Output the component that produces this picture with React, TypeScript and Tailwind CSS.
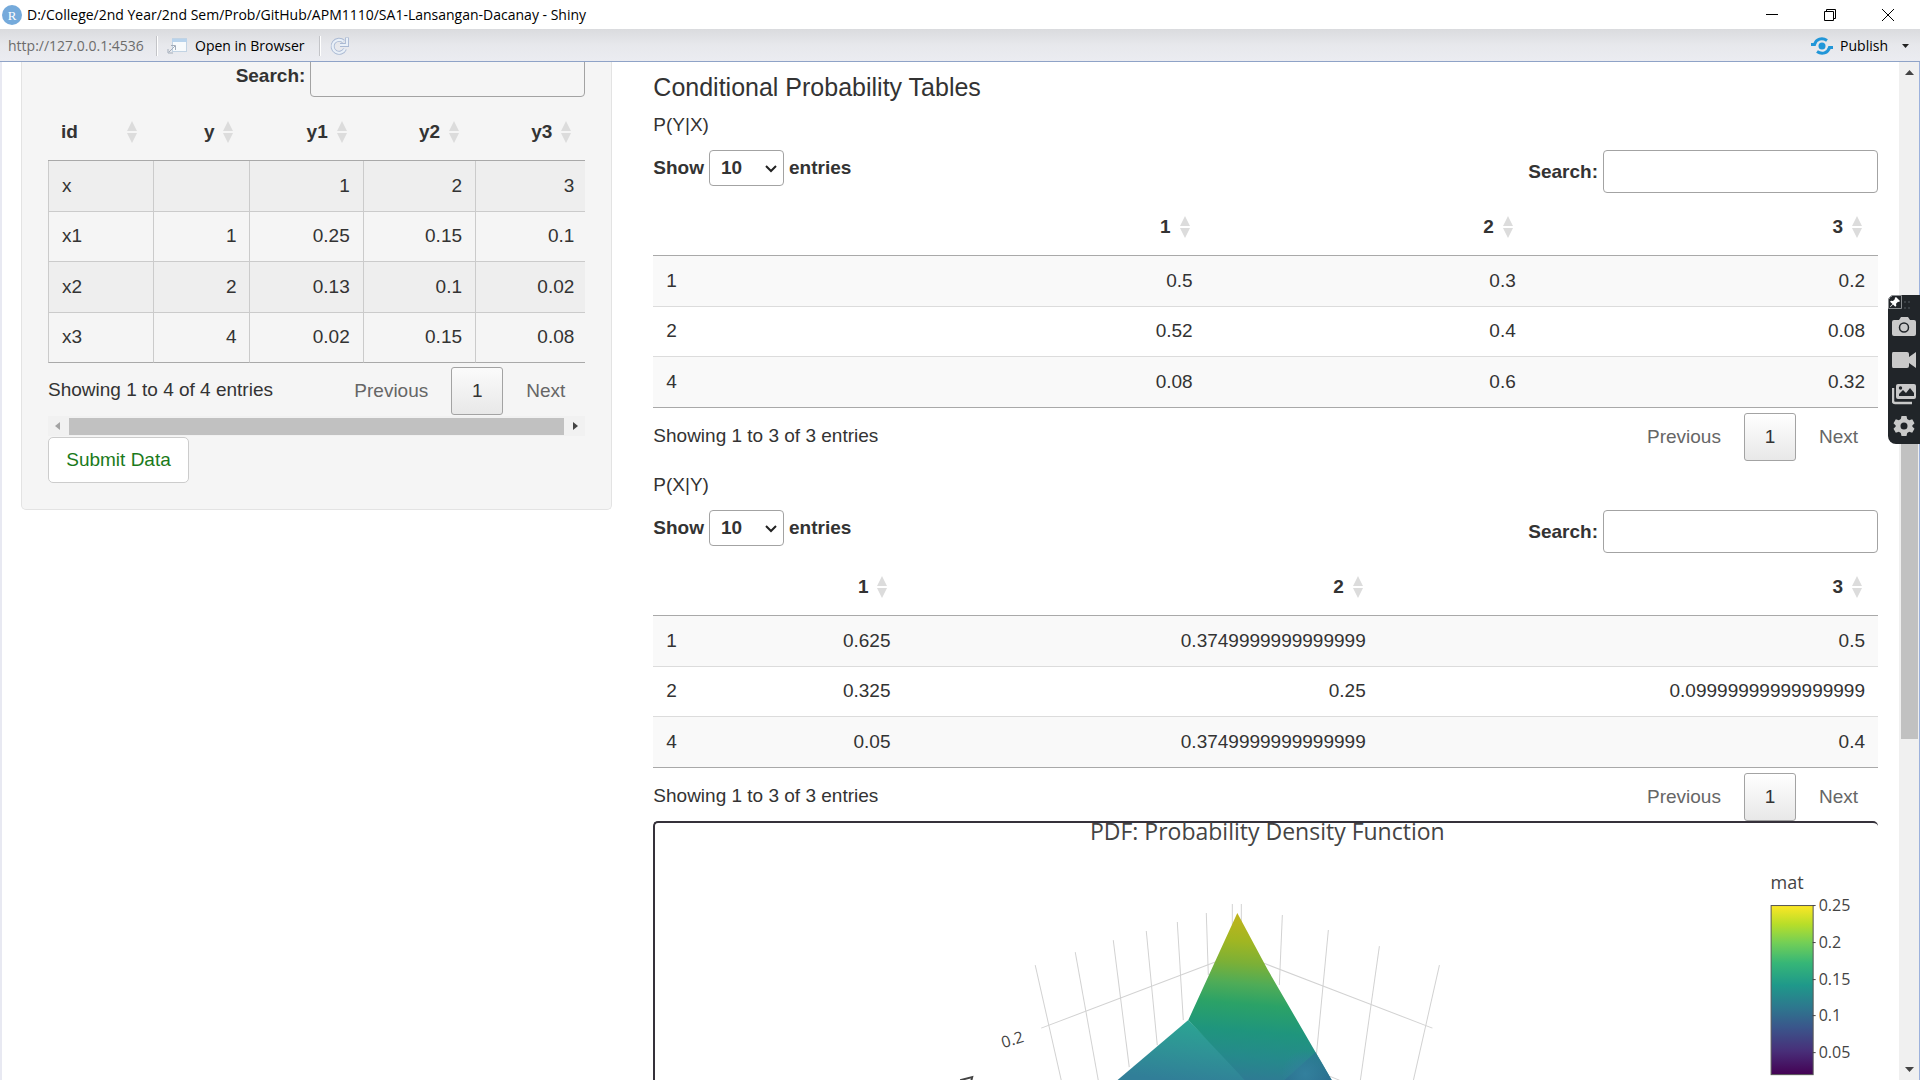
import React from "react";

const SortIcon = () => (
  <svg className="absolute right-4 top-1/2 -mt-[11px] h-[22px] w-[10px]" viewBox="0 0 10 22" fill="#dcdcdc" aria-hidden="true">
    <path d="M5 0 10 10H0zM5 22 10 12H0z" />
  </svg>
);

type TableProps = {
  label: string;
  cols: string[];
  heads: string[];
  rows: string[][];
  bordered?: boolean;
  className: string;
};

function DataTable({ label, cols, heads, rows, bordered, className }: TableProps) {
  return (
    <table aria-label={label} className={`table-fixed border-separate border-spacing-0 ${className}`}>
      <colgroup>
        {cols.map((c, i) => (
          <col key={i} className={c} />
        ))}
      </colgroup>
      <thead>
        <tr className="h-[57px]">
          {heads.map((h, i) => (
            <th
              key={i}
              className={`relative border-b border-[#a9a9a9] font-bold ${i === 0 ? "pl-[13px] text-left" : "pr-[35px] text-right"}`}
            >
              {h}
              {h && <SortIcon />}
            </th>
          ))}
        </tr>
      </thead>
      <tbody>
        {rows.map((r, ri) => {
          const last = ri === rows.length - 1;
          const bg = ri % 2 === 0 ? (bordered ? "bg-[#eeeeee]" : "bg-[#f9f9f9]") : "";
          return (
            <tr key={ri} className={bg}>
              {r.map((v, i) => (
                <td
                  key={i}
                  className={`border-b ${last ? "border-b-[#a9a9a9]" : bordered ? "border-b-[#cbcbcb]" : "border-b-[#dcdcdc]"} ${
                    bordered ? "border-l border-l-[#cbcbcb]" : ""
                  } ${i === 0 ? "pl-[13px] text-left" : "pr-[13px] text-right"}`}
                >
                  {v}
                </td>
              ))}
            </tr>
          );
        })}
      </tbody>
    </table>
  );
}

function Pager({ info }: { info: string }) {
  return (
    <div className="flex justify-between">
      <div className="pt-[11px]">{info}</div>
      <div className="flex h-12 items-center">
        <button className="h-12 px-5 text-[#666]">Previous</button>
        <button className="mx-[3px] h-12 w-[52px] rounded-[3px] border border-[#a3a3a3] bg-gradient-to-b from-white/60 to-[#e8e8e8]">
          1
        </button>
        <button className="h-12 px-5 text-[#666]">Next</button>
      </div>
    </div>
  );
}

function Search() {
  return (
    <label className="flex items-center gap-[5px] font-bold">
      Search:
      <input type="search" className="h-[43px] w-[275px] rounded-[4px] border border-[#a3a3a3] bg-transparent px-2 font-normal outline-none" />
    </label>
  );
}

function Controls() {
  return (
    <div className="flex items-start justify-between">
      <label className="flex items-center gap-[5px] font-bold">
        Show
        <span className="relative">
          <select className="h-9 w-[75px] appearance-none rounded-[4px] border border-[#a3a3a3] bg-transparent pl-[11px] font-bold">
            <option>10</option>
          </select>
          <svg className="pointer-events-none absolute right-[7px] top-[15px] h-2 w-3" viewBox="0 0 12 8" fill="none" stroke="#222" strokeWidth="2" aria-hidden="true">
            <path d="m1 1 5 5 5-5" />
          </svg>
        </span>
        entries
      </label>
      <Search />
    </div>
  );
}

const GRID = [
  "M1036 965 1062 1080",
  "M1076 952 1099 1080",
  "M1114 940 1130 1067",
  "M1147 931 1158 1045",
  "M1178 922 1184 1020",
  "M1207 913 1209 975",
  "M1233 904V925",
  "M1242 904V925",
  "M1283 915 1280 985",
  "M1329 930 1317 1055",
  "M1380 946 1361 1080",
  "M1440 965 1414 1080",
  "M1042 1028 1216 962",
  "M1264 963 1433 1028",
  "M1330 1076 1340 1080",
];

const TICKS: [string, number][] = [
  ["0.25", 905],
  ["0.2", 942],
  ["0.15", 979],
  ["0.1", 1015],
  ["0.05", 1052],
];

function Plot() {
  return (
    <div className="rounded-tl-[5px] rounded-tr-[5px] border-l-2 border-t-2 border-[#35313a]">
      <svg
        className="block h-[258px] w-full overflow-visible"
        viewBox="656 823 1222 258"
        preserveAspectRatio="xMidYMin slice"
        fontFamily='"Open Sans", sans-serif'
        fill="#444"
        role="img"
        aria-label="PDF: Probability Density Function"
      >
        <defs>
          <linearGradient id="viridis" x1="0" y1="0" x2="0" y2="1">
            <stop offset="0" stopColor="#fde725" />
            <stop offset=".11" stopColor="#b8de29" />
            <stop offset=".22" stopColor="#73cf56" />
            <stop offset=".34" stopColor="#36b677" />
            <stop offset=".47" stopColor="#1f998a" />
            <stop offset=".6" stopColor="#2d788e" />
            <stop offset=".72" stopColor="#3a568b" />
            <stop offset=".86" stopColor="#482f79" />
            <stop offset="1" stopColor="#440154" />
          </linearGradient>
          <linearGradient id="peak" gradientUnits="userSpaceOnUse" x1="1245" y1="913" x2="1232" y2="1080">
            <stop offset="0" stopColor="#c2b41c" />
            <stop offset=".17" stopColor="#a0b622" />
            <stop offset=".3" stopColor="#7bb037" />
            <stop offset=".42" stopColor="#4fac57" />
            <stop offset=".54" stopColor="#2ba267" />
            <stop offset=".7" stopColor="#1f957d" />
            <stop offset=".85" stopColor="#258a8b" />
            <stop offset="1" stopColor="#2f7a94" />
          </linearGradient>
          <linearGradient id="slope" gradientUnits="userSpaceOnUse" x1="1190" y1="1020" x2="1182" y2="1082">
            <stop offset="0" stopColor="#2ba592" />
            <stop offset=".5" stopColor="#2f9296" />
            <stop offset="1" stopColor="#317e98" />
          </linearGradient>
          <linearGradient id="facet" gradientUnits="userSpaceOnUse" x1="1312" y1="1040" x2="1315" y2="1080">
            <stop offset="0" stopColor="#24818a" />
            <stop offset="1" stopColor="#2c7091" />
          </linearGradient>
          <radialGradient id="glow" gradientUnits="userSpaceOnUse" cx="1306" cy="1074" r="24">
            <stop offset="0" stopColor="#33809d" />
            <stop offset="1" stopColor="#33809d" stopOpacity="0" />
          </radialGradient>
        </defs>
        <g fill="none" stroke="#d2d2d2">
          {GRID.map((d) => (
            <path key={d} d={d} />
          ))}
        </g>
        <path d="M1189 1020 1117 1081H1250z" fill="url(#slope)" />
        <path d="M1238 913 1189 1020 1240 1074 1246 1081H1333L1268 969z" fill="url(#peak)" />
        <path d="M1316 1052 1284 1081H1333z" fill="url(#facet)" />
        <path d="M1238 1050H1316L1333 1081H1246z" fill="url(#glow)" />
        <text x="1268" y="840" fontSize="23" textAnchor="middle">
          PDF: Probability Density Function
        </text>
        <text x="1013" y="1045" fontSize="16" textAnchor="middle" transform="rotate(-17 1013 1039)">
          0.2
        </text>
        <path d="M961 1080 973 1077 972 1081" fill="none" stroke="#444" strokeWidth="2" />
        <text x="1771" y="889" fontSize="18">
          mat
        </text>
        <rect x="1771.5" y="905.5" width="42" height="169" fill="url(#viridis)" stroke="#555" />
        {TICKS.map(([t, y]) => (
          <g key={t}>
            <path d={`M1813 ${y}.5h3`} stroke="#444" />
            <text x="1819" y={y + 6} fontSize="16">
              {t}
            </text>
          </g>
        ))}
      </svg>
    </div>
  );
}

const SIDE_ICONS: { name: string; art: React.ReactNode }[] = [
  {
    name: "Take screenshot",
    art: (
      <>
        <path d="M2 5h5l2-3h7l2 3h4q2 0 2 2v12q0 2-2 2H2q-2 0-2-2V7q0-2 2-2z" />
        <circle cx="12" cy="12.500" r="4.500" fill="none" stroke="#212529" strokeWidth="1.500" />
      </>
    ),
  },
  { name: "Record video", art: <path d="M1 4h14q2 0 2 2v3l7-5v16l-7-5v3q0 2-2 2H1q-1 0-1-2V6q0-2 1-2z" /> },
  {
    name: "Gallery",
    art: (
      <>
        <path d="M1 7v13q0 2 2 2h17" fill="none" stroke="#c9c9c9" strokeWidth="2.500" />
        <rect x="4" y="3" width="20" height="15" rx="2" />
        <path d="M7 15v-2l4-4 3 3 4-5 4 5v3z" fill="#212529" />
        <circle cx="8.500" cy="7" r="1.700" fill="#212529" />
      </>
    ),
  },
  {
    name: "Settings",
    art: (
      <path
        fillRule="evenodd"
        d="M9.500 2h5l.7 3 2 1.200 3-.9 2.300 4-2.200 2.100v1.200l2.200 2.100-2.300 4-3-.9-2 1.200-.7 3h-5l-.7-3-2-1.200-3 .9-2.300-4 2.200-2.100v-1.200L1.500 9.300l2.300-4 3 .9 2-1.200zM12 8.500a3.500 3.500 0 1 0 0 7 3.500 3.500 0 0 0 0-7z"
      />
    ),
  },
];

export default function App() {
  return (
    <div className="flex h-screen flex-col overflow-hidden bg-white font-['Liberation_Sans',Arial,sans-serif] text-[19px] leading-6 text-[#333]">
      <header className="flex h-[29px] shrink-0 items-center bg-white pl-0.5 font-['Open_Sans',sans-serif] text-[14px] text-black">
        <svg className="mr-[5px] h-5 w-5" viewBox="0 0 20 20" aria-hidden="true">
          <circle cx="10" cy="10" r="10" fill="#75aadb" />
          <text x="10" y="15" textAnchor="middle" fontSize="13" fill="#fff" fontFamily='"Liberation Serif", serif'>
            R
          </text>
        </svg>
        <h1 className="flex-1">D:/College/2nd Year/2nd Sem/Prob/GitHub/APM1110/SA1-Lansangan-Dacanay - Shiny</h1>
        <div className="flex gap-[46px] pr-[26px]">
          <button aria-label="Minimize">
            <svg className="h-3 w-3" viewBox="0 0 12 12" stroke="#000" fill="none">
              <path d="M0 5.500h12" />
            </svg>
          </button>
          <button aria-label="Restore">
            <svg className="h-3 w-3" viewBox="0 0 12 12" stroke="#000" fill="none">
              <path d="M.5 2.500h9v9h-9zM2.500 2.500v-2h9v9h-2" />
            </svg>
          </button>
          <button aria-label="Close">
            <svg className="h-3 w-3" viewBox="0 0 12 12" stroke="#000" fill="none">
              <path d="m0 0 12 12M12 0 0 12" />
            </svg>
          </button>
        </div>
      </header>

      <nav className="flex h-[33px] shrink-0 items-center border-b border-[#8fa3c7] bg-gradient-to-b from-[#dadbde] via-[#e7e8ec] to-[#ebecf1] pl-2 pt-0.5 font-['Open_Sans',sans-serif] text-[14px] text-black">
        <span className="w-[148px] text-[#6c6c6c]">http://127.0.0.1:4536</span>
        <span className="h-5 w-0.5 border-l border-[#c3c4c8] bg-white" />
        <button className="ml-[9px] flex items-center gap-[7px]">
          <svg className="h-[18px] w-[21px]" viewBox="0 0 21 18" fill="none" aria-hidden="true">
            <rect x="5.500" y="1.500" width="14" height="13" fill="#f7fafc" stroke="#c2d3e3" />
            <path d="M5 2h15v3H5z" fill="#b8d3ec" />
            <path d="M1 12v4h5M2 15 8 9M4 8.500h4.500V13" stroke="#a3adba" />
          </svg>
          Open in Browser
        </button>
        <span className="ml-[14px] h-5 w-0.5 border-l border-[#c3c4c8] bg-white" />
        <button aria-label="Refresh" className="ml-2">
          <svg className="h-5 w-5" viewBox="0 0 20 20" fill="none" aria-hidden="true">
            <path d="M14.500 5.500A6.500 6.500 0 1 0 16 13M18 1.500V9h-7" stroke="#aab9d3" strokeWidth="4" />
            <path d="M14.500 5.500A6.500 6.500 0 1 0 16 13M18 2V9h-7" stroke="#e9f0f8" strokeWidth="2.200" />
          </svg>
        </button>
        <button className="ml-auto flex items-center gap-[7px]">
          <svg className="h-[18px] w-[22px]" viewBox="0 0 22 18" fill="none" stroke="#2196d8" strokeWidth="3" aria-hidden="true">
            <circle cx="11" cy="9" r="3.500" fill="#2196d8" stroke="none" />
            <path d="M0 7.500h3.500C5 2 11 0 16 3.500M22 10.500h-3.500C17 16 11 18 6 14.500" />
          </svg>
          Publish
        </button>
        <button aria-label="Publish options" className="ml-[14px] mr-[11px]">
          <svg className="h-1 w-[7px]" viewBox="0 0 7 4" aria-hidden="true">
            <path d="M0 0h7L3.500 4z" fill="#222" />
          </svg>
        </button>
      </nav>

      <div className="relative flex min-h-0 flex-1 border-r border-[#9db2dc]">
        <div className="grid min-w-0 flex-1 grid-cols-[minmax(0,1fr)_minmax(0,2fr)] items-start overflow-hidden border-l-2 border-[#e8e9f2]">
          <aside className="-mt-[8px] ml-[19px] mr-[22px] rounded-b-[5px] border border-t-0 border-[#e3e3e3] bg-[#f5f5f5] px-[26px] pb-[26px]">
            <div className="flex justify-end">
              <Search />
            </div>
            <div className="mt-[7px] overflow-hidden">
              <DataTable
                label="Joint probabilities"
                className="h-[259px] w-[calc(100%+2px)]"
                bordered
                cols={["w-[105px]", "w-[96px]", "w-[113px]", "w-[112px]", "w-[112px]"]}
                heads={["id", "y", "y1", "y2", "y3"]}
                rows={[
                  ["x", "", "1", "2", "3"],
                  ["x1", "1", "0.25", "0.15", "0.1"],
                  ["x2", "2", "0.13", "0.1", "0.02"],
                  ["x3", "4", "0.02", "0.15", "0.08"],
                ]}
              />
            </div>
            <div className="mt-1">
              <Pager info="Showing 1 to 4 of 4 entries" />
            </div>
            <div className="mt-px flex h-5 items-center justify-between bg-[#f1f1f1] px-[7px]" aria-hidden="true">
              <svg className="h-2 w-[5px]" viewBox="0 0 5 8">
                <path d="M5 0v8L0 4z" fill="#a3a3a3" />
              </svg>
              <span className="mx-[9px] h-[17px] flex-1 bg-[#c1c1c1]" />
              <svg className="h-2 w-[5px]" viewBox="0 0 5 8">
                <path d="M0 0v8l5-4z" fill="#444" />
              </svg>
            </div>
            <button className="mt-px h-[46px] w-[141px] rounded-[5px] border border-[#ccc] bg-white text-[#1a7a1a]">Submit Data</button>
          </aside>

          <main className="ml-[19px] mr-[21px] pt-[10px]">
            <h2 className="text-[25px] leading-[30px]">Conditional Probability Tables</h2>
            <p className="mt-[11px]">P(Y|X)</p>
            <div className="mt-[13px]">
              <Controls />
              <div className="mt-[6px]">
                <DataTable
                  label="P(Y|X)"
                  className="h-[209px] w-full"
                  cols={["w-[50px]", "w-[502px]", "w-[323px]", "w-[349px]"]}
                  heads={["", "1", "2", "3"]}
                  rows={[
                    ["1", "0.5", "0.3", "0.2"],
                    ["2", "0.52", "0.4", "0.08"],
                    ["4", "0.08", "0.6", "0.32"],
                  ]}
                />
              </div>
              <div className="mt-[5px]">
                <Pager info="Showing 1 to 3 of 3 entries" />
              </div>
            </div>
            <p className="mt-3">P(X|Y)</p>
            <div className="mt-[13px]">
              <Controls />
              <div className="mt-[6px]">
                <DataTable
                  label="P(X|Y)"
                  className="h-[209px] w-full"
                  cols={["w-[50px]", "w-[200px]", "w-[475px]", "w-[499px]"]}
                  heads={["", "1", "2", "3"]}
                  rows={[
                    ["1", "0.625", "0.3749999999999999", "0.5"],
                    ["2", "0.325", "0.25", "0.09999999999999999"],
                    ["4", "0.05", "0.3749999999999999", "0.4"],
                  ]}
                />
              </div>
              <div className="mt-[5px]">
                <Pager info="Showing 1 to 3 of 3 entries" />
              </div>
            </div>
            <Plot />
          </main>
        </div>

        <div className="flex w-5 shrink-0 flex-col items-center bg-[#f0f0f0]" aria-hidden="true">
          <svg className="mt-2 h-[5px] w-[9px]" viewBox="0 0 9 5">
            <path d="M0 5h9L4.500 0z" fill="#444" />
          </svg>
          <span className="mt-[260px] h-[404px] w-[17px] bg-[#c1c1c1]" />
          <svg className="mb-2 mt-auto h-[5px] w-[9px]" viewBox="0 0 9 5">
            <path d="M0 0h9L4.500 5z" fill="#444" />
          </svg>
        </div>

        <div className="absolute -right-px top-[233px] flex h-[149px] w-8 flex-col items-center rounded-l-[8px] bg-[#212529]">
          <div className="flex h-[15px] w-full items-start">
            <svg className="h-[14px] w-[24px]" viewBox="0 0 24 14" aria-hidden="true">
              <path d="M.5 3.500 3.500.5h10v13H.5z" fill="none" stroke="#8a8d90" />
              <path d="m8 2 4 4-1 1-1-.3-2 2 .3 2-1 1L5 9.500 2.500 12 2 11.500 4.500 9 2 6.700l1-1 2 .3 2-2L6.700 3z" fill="#fff" />
              <path d="M16 6h2v2h-2zM20 6h2v2h-2zM16 12h2v2h-2zM20 12h2v2h-2z" fill="#3b4045" />
            </svg>
          </div>
          <div className="flex flex-col gap-[9px] pt-[5px]">
            {SIDE_ICONS.map((i) => (
              <button key={i.name} aria-label={i.name} className="h-6 w-6">
                <svg className="h-6 w-6" viewBox="0 0 24 24" fill="#c9c9c9">
                  {i.art}
                </svg>
              </button>
            ))}
          </div>
        </div>
      </div>
    </div>
  );
}
